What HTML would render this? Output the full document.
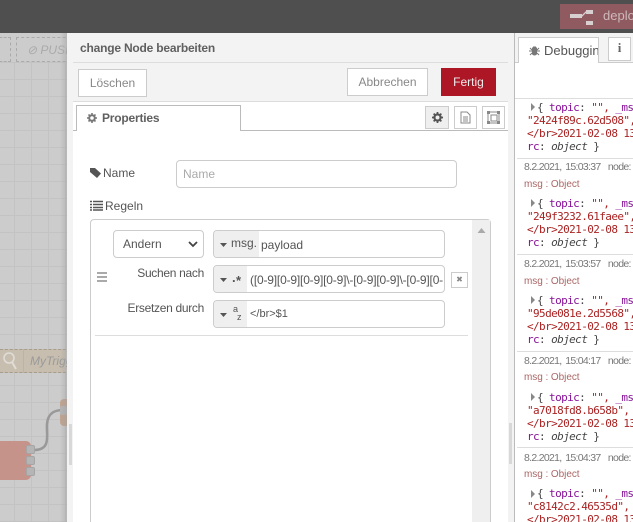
<!DOCTYPE html>
<html><head><meta charset="utf-8">
<style>
html,body{margin:0;padding:0;width:633px;height:522px;overflow:hidden;background:#fff}
body{position:relative;font-family:"Liberation Sans",sans-serif;font-size:12px;color:#555}
#w{position:absolute;left:0;top:0;width:633px;height:522px;overflow:hidden;filter:blur(.35px)}
.a{position:absolute;box-sizing:border-box;white-space:nowrap}
.in{border:1px solid #ccc;border-radius:4px;background:#fff;overflow:hidden}
.g{position:absolute;left:0;top:0;bottom:0;background:#efefef}
.btn{border:1px solid #ccc;background:#fff;text-align:center;color:#888}
.m{font-family:"DejaVu Sans Mono","Liberation Mono",monospace;font-size:11px;letter-spacing:-.6px;line-height:13px;color:#aa2222;left:527px;width:106px;overflow:hidden}
.p{color:#881199}
.ts{font-size:10.5px;color:#777;left:524px;letter-spacing:-.7px;word-spacing:1.5px}
.ob{font-size:10px;color:#a66;left:524px;letter-spacing:-.05px}
.sep{left:517px;width:116px;height:1px;background:#ddd}
</style></head><body><div id="w">
<!-- header -->
<div class="a" style="left:0;top:0;width:633px;height:33px;background:#4f4f4f"></div>
<div class="a" style="left:560px;top:4px;width:73px;height:25px;background:#8f5a60"></div>
<svg class="a" style="left:570px;top:9px" width="24" height="17"><rect x="0" y="5" width="12" height="4" fill="#d8d0d0"/><rect x="16" y="1" width="7" height="4" fill="#d8d0d0"/><rect x="16" y="12" width="7" height="4" fill="#d8d0d0"/><path d="M11 7h1l5-5" stroke="#d8d0d0" stroke-width="1.300" fill="none"/></svg>
<div class="a" style="left:603px;top:8px;font-size:13px;color:#cdb9bb">deploy</div>
<!-- canvas -->
<div class="a" style="left:0;top:33px;width:67px;height:489px;background-color:#cccccc;background-image:linear-gradient(#c3c3c3 1px,transparent 1px),linear-gradient(90deg,#c3c3c3 1px,transparent 1px);background-size:17px 17px;background-position:-3px 12px"></div>
<div class="a" style="left:0;top:33px;width:67px;height:29px;background:#cccccc"></div>
<div class="a" style="left:-5px;top:37px;width:16px;height:25px;border:1px dashed #aaa"></div>
<div class="a" style="left:16px;top:37px;width:60px;height:25px;border:1px dashed #aaa"></div>
<div class="a" style="left:27px;top:43px;font-size:12px;font-style:italic;color:#aaa">⊘ PUSH</div>
<div class="a" style="left:0;top:349px;width:66px;height:24px;border-top:1px dashed #a59c8c;border-bottom:1px dashed #a59c8c;background:#c7beb0"></div>
<svg class="a" style="left:0;top:350px" width="24" height="22"><circle cx="9" cy="8" r="5" fill="none" stroke="#e0dcd6" stroke-width="1.600"/><path d="M12 12l4 7" stroke="#e0dcd6" stroke-width="2"/></svg>
<div class="a" style="left:23px;top:349px;width:1px;height:24px;background:#bbb3a5"></div>
<div class="a" style="left:30px;top:354px;font-size:12px;font-style:italic;color:#999">MyTrigger</div>
<div class="a" style="left:-6px;top:441px;width:37px;height:39px;border-radius:5px;background:#c5938a"></div>
<svg class="a" style="left:30px;top:400px" width="37" height="60"><path d="M4 50C22 50 16 34 17 24C18 12 26 10 33 10" fill="none" stroke="#999" stroke-width="2.500"/></svg>
<div class="a" style="left:26px;top:445px;width:9px;height:9px;border-radius:2px;background:#b5b5b5;border:1px solid #a5a5a5"></div>
<div class="a" style="left:26px;top:456px;width:9px;height:9px;border-radius:2px;background:#b5b5b5;border:1px solid #a5a5a5"></div>
<div class="a" style="left:26px;top:467px;width:9px;height:9px;border-radius:2px;background:#b5b5b5;border:1px solid #a5a5a5"></div>
<div class="a" style="left:60px;top:399px;width:7px;height:27px;background:#c0a48f;border-radius:4px 0 0 4px"></div>
<div class="a" style="left:60px;top:406px;width:7px;height:9px;background:#b5b5b5;border-radius:2px"></div>
<!-- tray -->
<div class="a" style="left:60px;top:33px;width:7px;height:489px;background:linear-gradient(90deg,rgba(160,160,160,0),rgba(160,160,160,.5))"></div>
<div class="a" style="left:67px;top:33px;width:447px;height:489px;background:#f3f3f3"></div>
<div class="a" style="left:73px;top:101px;width:435px;height:421px;background:#fff"></div>
<div class="a" style="left:73px;top:62px;width:435px;height:1px;background:#ddd"></div>
<div class="a" style="left:73px;top:101px;width:435px;height:1px;background:#ddd"></div>
<div class="a" style="left:69px;top:424px;width:3px;height:41px;background:#d8d8d8"></div>
<div class="a" style="left:509px;top:423px;width:3px;height:41px;background:#d8d8d8"></div>
<div class="a" style="left:80px;top:41px;font-size:12px;font-weight:bold;letter-spacing:-.2px;color:#606060">change Node bearbeiten</div>
<div class="a btn" style="left:78px;top:69px;width:69px;height:28px;line-height:26px">Löschen</div>
<div class="a btn" style="left:347px;top:68px;width:81px;height:28px;line-height:26px">Abbrechen</div>
<div class="a" style="left:441px;top:68px;width:55px;height:28px;line-height:28px;background:#ad1625;color:#eee;text-align:center">Fertig</div>
<!-- tabs -->
<div class="a" style="left:73px;top:130px;width:435px;height:1px;background:#bbb"></div>
<div class="a" style="left:76px;top:105px;width:165px;height:26px;background:#fff;border:1px solid #bbb;border-bottom:0"></div>
<svg class="a" style="left:87px;top:113px" width="10" height="10" viewBox="0 0 10 10"><circle cx="5" cy="5" r="2.800" fill="none" stroke="#777" stroke-width="2"/><path d="M5 0v2M5 8v2M0 5h2M8 5h2M1.500 1.500l1.400 1.400M7.100 7.100l1.400 1.400M1.500 8.500l1.400-1.400M7.100 2.900l1.400-1.400" stroke="#777" stroke-width="1.600"/></svg>
<div class="a" style="left:102px;top:111px;font-size:12px;font-weight:bold;letter-spacing:-.2px;color:#606060">Properties</div>
<div class="a" style="left:425px;top:106px;width:24px;height:23px;background:#efefef;border:1px solid #ccc"></div>
<svg class="a" style="left:432px;top:112px" width="11" height="11" viewBox="0 0 10 10"><circle cx="5" cy="5" r="2.800" fill="none" stroke="#555" stroke-width="2"/><path d="M5 0v2M5 8v2M0 5h2M8 5h2M1.500 1.500l1.400 1.400M7.100 7.100l1.400 1.400M1.500 8.500l1.400-1.400M7.100 2.900l1.400-1.400" stroke="#555" stroke-width="1.600"/></svg>
<div class="a" style="left:454px;top:106px;width:23px;height:23px;background:#fff;border:1px solid #ccc"></div>
<svg class="a" style="left:460px;top:111px" width="11" height="13" viewBox="0 0 11 13"><path d="M1 1h6l3 3v8H1zM3 6h5M3 8h5M3 10h5" fill="none" stroke="#888"/></svg>
<div class="a" style="left:482px;top:106px;width:23px;height:23px;background:#fff;border:1px solid #ccc"></div>
<svg class="a" style="left:486px;top:110px" width="15" height="15" viewBox="0 0 15 15"><path d="M2 2h11v11H2zM5 5h6v6H5z" fill="none" stroke="#888"/><rect x="1" y="1" width="3" height="3" fill="#888"/><rect x="11" y="1" width="3" height="3" fill="#888"/><rect x="1" y="11" width="3" height="3" fill="#888"/><rect x="11" y="11" width="3" height="3" fill="#888"/></svg>
<!-- form -->
<svg class="a" style="left:90px;top:168px" width="11" height="10" viewBox="0 0 11 10"><path d="M0 0h5l6 5.500-4 4.500L0 4z" fill="#555"/></svg>
<div class="a" style="left:103px;top:166px;color:#555">Name</div>
<div class="a in" style="left:176px;top:160px;width:281px;height:28px;line-height:26px;padding-left:6px;color:#aaa">Name</div>
<svg class="a" style="left:90px;top:200px" width="13" height="11" viewBox="0 0 13 11"><path d="M0 1.500h2M3 1.500h10M0 4.500h2M3 4.500h10M0 7.500h2M3 7.500h10M0 10h2M3 10h10" stroke="#555" stroke-width="1.400"/></svg>
<div class="a" style="left:105px;top:199px;color:#555">Regeln</div>
<div class="a" style="left:90px;top:219px;width:401px;height:303px;border:1px solid #ccc;border-bottom:0;border-radius:4px 4px 0 0;background:#fff"></div>
<div class="a" style="left:472px;top:220px;width:18px;height:302px;background:#efefef"></div>
<svg class="a" style="left:476px;top:227px" width="11" height="7"><path d="M1.500 6L5.500 1l4 5z" fill="#aaa"/></svg>
<div class="a" style="left:97px;top:272px;width:10px;height:2px;background:#aaa"></div>
<div class="a" style="left:97px;top:276px;width:10px;height:2px;background:#aaa"></div>
<div class="a" style="left:97px;top:280px;width:10px;height:2px;background:#aaa"></div>
<div class="a in" style="left:113px;top:230px;width:91px;height:28px;line-height:26px;padding-left:9px;color:#555">Andern</div>
<svg class="a" style="left:188px;top:241px" width="10" height="7"><path d="M1 1l4 4 4-4" fill="none" stroke="#444" stroke-width="1.800"/></svg>
<div class="a in" style="left:213px;top:230px;width:232px;height:28px"><div class="g" style="width:45px"></div>
<svg class="a" style="left:5px;top:11px" width="9" height="6"><path d="M1 1h7L4.500 5z" fill="#555"/></svg>
<span class="a" style="left:17px;top:5px;color:#555">msg.</span><span class="a" style="left:47px;top:7px;color:#555">payload</span></div>
<div class="a" style="left:100px;width:104px;top:266px;text-align:right;color:#555;letter-spacing:-.3px">Suchen nach</div>
<div class="a in" style="left:213px;top:265px;width:232px;height:28px"><div class="g" style="width:33px"></div>
<svg class="a" style="left:5px;top:11px" width="9" height="6"><path d="M1 1h7L4.500 5z" fill="#555"/></svg>
<span class="a" style="left:18px;top:4px;font-weight:bold;font-size:13px;color:#555">.</span><span class="a" style="left:22px;top:7px;font-weight:bold;font-size:13px;color:#555">*</span><span class="a" style="left:36px;top:7px;color:#555;letter-spacing:-.18px">([0-9][0-9][0-9][0-9]\-[0-9][0-9]\-[0-9][0-</span></div>
<div class="a" style="left:100px;width:104px;top:301px;text-align:right;color:#555;letter-spacing:-.3px">Ersetzen durch</div>
<div class="a in" style="left:213px;top:300px;width:232px;height:28px"><div class="g" style="width:33px"></div>
<svg class="a" style="left:5px;top:11px" width="9" height="6"><path d="M1 1h7L4.500 5z" fill="#555"/></svg>
<span class="a" style="left:19px;top:3px;font-size:9px;color:#555">a</span><span class="a" style="left:23px;top:11px;font-size:9px;color:#555">z</span><span class="a" style="left:36px;top:7px;color:#555;font-size:11px">&lt;/br&gt;$1</span></div>
<div class="a" style="left:95px;top:335px;width:373px;height:1px;background:#ddd"></div>
<div class="a" style="left:451px;top:272px;width:17px;height:16px;border:1px solid #ccc;background:#fff;text-align:center;font-size:8px;line-height:14px;color:#888">✖</div>
<!-- sidebar -->
<div class="a" style="left:514px;top:33px;width:1px;height:489px;background:#bbb"></div>
<div class="a" style="left:515px;top:33px;width:118px;height:489px;background:#fff"></div>
<div class="a" style="left:515px;top:98px;width:118px;height:1px;background:#ddd"></div>
<div class="a" style="left:515px;top:33px;width:118px;height:29px;background:#f3f3f3"></div>
<div class="a" style="left:515px;top:62px;width:118px;height:1px;background:#ccc"></div>
<div class="a" style="left:518px;top:37px;width:81px;height:26px;background:#fff;border:1px solid #ccc;border-bottom:0;overflow:hidden">
<svg class="a" style="left:10px;top:7px" width="11" height="11" viewBox="0 0 11 11"><path d="M3.500 3h4v6q-2 2-4 0zM4 2h3M1 3l2 2M10 3L8 5M0 6h3M11 6H8M1 10l2-2M10 10L8 8" fill="#777" stroke="#777"/></svg>
<span class="a" style="left:25px;top:5px;font-size:13px;color:#555">Debugging</span></div>
<div class="a" style="left:608px;top:37px;width:23px;height:24px;background:#fff;border:1px solid #ccc;text-align:center;line-height:20px;font-family:'Liberation Serif',serif;font-weight:bold;font-size:13px;color:#666">i</div>

<svg class="a" style="left:530px;top:103px" width="6" height="8"><path d="M1 0l4 4-4 4z" fill="#888"/></svg>
<div class="a m" style="top:101px;height:52px"><span style="color:#444;margin-left:10px">{ </span><span class="p">topic</span><span style="color:#444">: </span>"", <span class="p">_msgid</span><br>"2424f89c.62d508",<br>&lt;/br&gt;2021-02-08 13:<br><span class="p">rc</span><span style="color:#444">: <i>object</i> }</span></div>
<div class="a sep" style="top:158px"></div>
<div class="a ts" style="top:161px">8.2.2021, 15:03:37 &nbsp;node:</div>
<div class="a ob" style="top:179px">msg : Object</div>

<svg class="a" style="left:530px;top:199px" width="6" height="8"><path d="M1 0l4 4-4 4z" fill="#888"/></svg>
<div class="a m" style="top:197px;height:52px"><span style="color:#444;margin-left:10px">{ </span><span class="p">topic</span><span style="color:#444">: </span>"", <span class="p">_msgid</span><br>"249f3232.61faee",<br>&lt;/br&gt;2021-02-08 13:<br><span class="p">rc</span><span style="color:#444">: <i>object</i> }</span></div>
<div class="a sep" style="top:254px"></div>
<div class="a ts" style="top:258px">8.2.2021, 15:03:57 &nbsp;node:</div>
<div class="a ob" style="top:276px">msg : Object</div>

<svg class="a" style="left:530px;top:296px" width="6" height="8"><path d="M1 0l4 4-4 4z" fill="#888"/></svg>
<div class="a m" style="top:294px;height:52px"><span style="color:#444;margin-left:10px">{ </span><span class="p">topic</span><span style="color:#444">: </span>"", <span class="p">_msgid</span><br>"95de081e.2d5568",<br>&lt;/br&gt;2021-02-08 13:<br><span class="p">rc</span><span style="color:#444">: <i>object</i> }</span></div>
<div class="a sep" style="top:351px"></div>
<div class="a ts" style="top:355px">8.2.2021, 15:04:17 &nbsp;node:</div>
<div class="a ob" style="top:372px">msg : Object</div>

<svg class="a" style="left:530px;top:393px" width="6" height="8"><path d="M1 0l4 4-4 4z" fill="#888"/></svg>
<div class="a m" style="top:391px;height:52px"><span style="color:#444;margin-left:10px">{ </span><span class="p">topic</span><span style="color:#444">: </span>"", <span class="p">_msgid</span><br>"a7018fd8.b658b",<br>&lt;/br&gt;2021-02-08 13:<br><span class="p">rc</span><span style="color:#444">: <i>object</i> }</span></div>
<div class="a sep" style="top:447px"></div>
<div class="a ts" style="top:452px">8.2.2021, 15:04:37 &nbsp;node:</div>
<div class="a ob" style="top:469px">msg : Object</div>

<svg class="a" style="left:530px;top:490px" width="6" height="8"><path d="M1 0l4 4-4 4z" fill="#888"/></svg>
<div class="a m" style="top:487px;height:35px"><span style="color:#444;margin-left:10px">{ </span><span class="p">topic</span><span style="color:#444">: </span>"", <span class="p">_msgid</span><br>"c8142c2.46535d",<br>&lt;/br&gt;2021-02-08 13:</div>
</div></body></html>
